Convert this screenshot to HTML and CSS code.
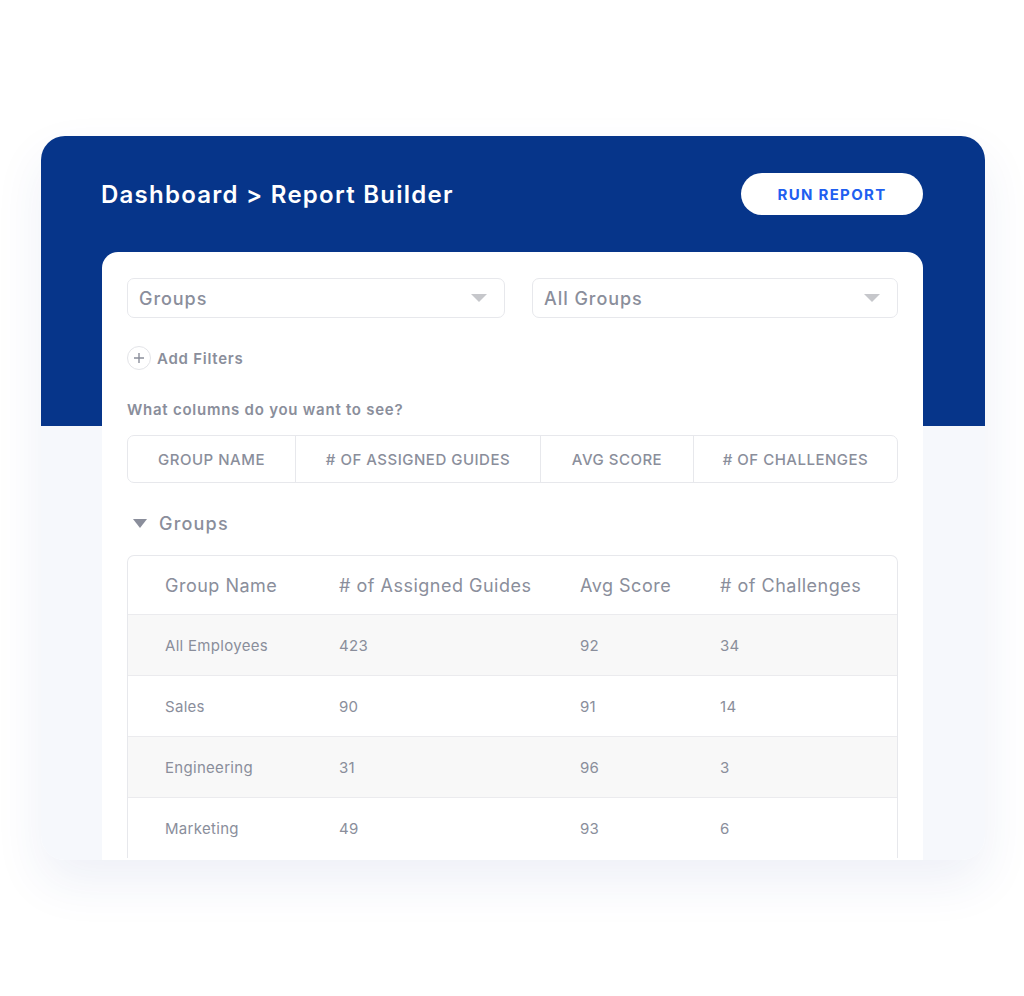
FILE: index.html
```html
<!DOCTYPE html>
<html lang="en">
<head>
<meta charset="utf-8">
<title>Report Builder</title>
<link rel="stylesheet" href="styles.css">
</head>
<body>
<div class="card">
  <div class="header">
    <h1 class="title">Dashboard &gt; Report Builder</h1>
    <button class="run-btn">RUN REPORT</button>
  </div>
  <div class="panel">
    <div class="selects">
      <div class="select"><span>Groups</span><span class="caret"></span></div>
      <div class="select"><span>All Groups</span><span class="caret"></span></div>
    </div>
    <div class="add-filters">
      <span class="plus"><svg width="12" height="12" viewBox="0 0 12 12"><path d="M6 1v10M1 6h10" stroke="#8a8e9b" stroke-width="1.4" fill="none"/></svg></span>
      <span>Add Filters</span>
    </div>
    <div class="question">What columns do you want to see?</div>
    <div class="chips">
      <div class="chip c1">GROUP NAME</div>
      <div class="chip c2"># OF ASSIGNED GUIDES</div>
      <div class="chip c3">AVG SCORE</div>
      <div class="chip c4"># OF CHALLENGES</div>
    </div>
    <div class="section-title"><span class="tri"></span><span>Groups</span></div>
    <div class="table">
      <div class="row head"><div>Group Name</div><div># of Assigned Guides</div><div>Avg Score</div><div># of Challenges</div></div>
      <div class="row alt"><div>All Employees</div><div>423</div><div>92</div><div>34</div></div>
      <div class="row"><div>Sales</div><div>90</div><div>91</div><div>14</div></div>
      <div class="row alt"><div>Engineering</div><div>31</div><div>96</div><div>3</div></div>
      <div class="row"><div>Marketing</div><div>49</div><div>93</div><div>6</div></div>
    </div>
  </div>
</div>
</body>
</html>
```

FILE: styles.css
```css
* { box-sizing: border-box; }
html, body { margin: 0; padding: 0; background: #ffffff; }
body {
  font-family: Inter, "Noto Sans", "Liberation Sans", sans-serif;
  color: #8a8e9b;
  padding-top: 136px;
  height: 996px;
}
.card {
  margin-left: 41px;
  width: 944px;
  height: 724px;
  border-radius: 24px;
  overflow: hidden;
  background: linear-gradient(#06358a 0, #06358a 290px, #f6f8fc 290px, #f6f8fc 100%);
  box-shadow: 0 22px 50px rgba(40, 70, 150, 0.08);
  display: flex;
  flex-direction: column;
}
.header {
  display: flex;
  align-items: center;
  justify-content: space-between;
  padding: 37px 62px 0 60px;
  height: 79px;
}
.title {
  margin: 0;
  font-size: 24px;
  font-weight: 600;
  color: #ffffff;
  letter-spacing: 1.25px;
}
.run-btn {
  width: 182px;
  height: 42px;
  border: none;
  border-radius: 21px;
  background: #ffffff;
  color: #1f5ff0;
  font-family: inherit;
  font-size: 15px;
  font-weight: 700;
  letter-spacing: 1.3px;
  padding: 0;
}
.panel {
  margin: 37px 62px 0 61px;
  flex: 1;
  background: #ffffff;
  border-radius: 16px 16px 0 0;
  padding: 26px 25px 0 25px;
  overflow: hidden;
}
.selects {
  display: grid;
  grid-template-columns: 378px 1fr;
  gap: 27px;
}
.select {
  height: 40px;
  border: 1.5px solid #e7e8ec;
  border-radius: 7px;
  display: flex;
  align-items: center;
  justify-content: space-between;
  padding: 0 17px 0 11px;
  font-size: 18px;
  font-weight: 500;
  color: #8a8e9b;
  letter-spacing: 0.95px;
}
.caret {
  width: 0; height: 0;
  border-left: 8px solid transparent;
  border-right: 8px solid transparent;
  border-top: 8px solid #c6c7cb;
}
.add-filters {
  margin-top: 28px;
  display: flex;
  align-items: center;
  gap: 6px;
  font-size: 15px;
  font-weight: 600;
  letter-spacing: 0.75px;
}
.plus {
  width: 24px; height: 24px;
  border: 1.5px solid #e3e4e8;
  border-radius: 50%;
  display: flex;
  align-items: center;
  justify-content: center;
}
.question {
  margin-top: 30px;
  line-height: 20px;
  font-size: 15px;
  font-weight: 600;
  letter-spacing: 0.75px;
}
.chips {
  margin-top: 15px;
  height: 48px;
  border: 1.5px solid #e7e8ec;
  border-radius: 7px;
  display: grid;
  grid-template-columns: 168px 245px 153px 1fr;
}
.chip {
  display: flex;
  align-items: center;
  justify-content: center;
  font-size: 15px;
  font-weight: 500;
  letter-spacing: 0.5px;
  border-right: 1.5px solid #e7e8ec;
}
.chip.c4 { border-right: none; }
.section-title {
  margin-top: 30px;
  height: 20px;
  display: flex;
  align-items: center;
  gap: 12px;
  padding-left: 6px;
  font-size: 18px;
  font-weight: 500;
  letter-spacing: 1.2px;
}
.tri {
  width: 0; height: 0;
  border-left: 7.5px solid transparent;
  border-right: 7.5px solid transparent;
  border-top: 9px solid #8a8e9b;
}
.table {
  margin-top: 22px;
  border: 1.5px solid #e7e8ec;
  border-bottom: none;
  border-radius: 7px 7px 0 0;
  overflow: hidden;
}
.row {
  display: grid;
  grid-template-columns: 174px 241px 140px 1fr;
  padding-left: 37px;
  height: 61px;
  align-items: center;
  font-size: 15px;
  letter-spacing: 0.3px;
  border-top: 1.5px solid #ebebee;
}
.row.head {
  height: 58px;
  border-top: none;
  font-size: 18px;
  letter-spacing: 0.5px;
}
.row.alt { background: #f8f8f8; }
```
